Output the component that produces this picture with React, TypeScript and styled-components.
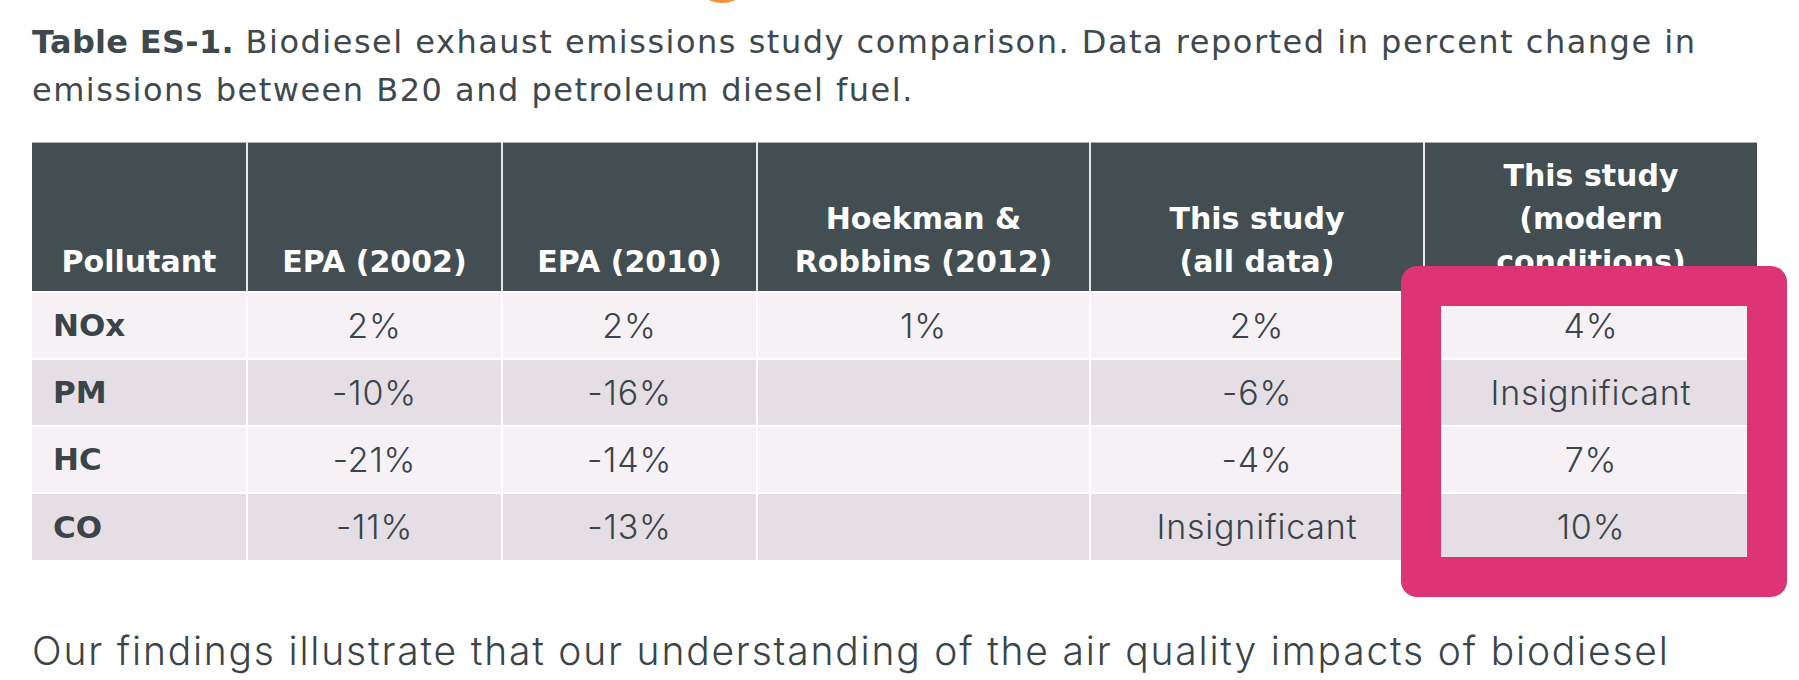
import styled, { createGlobalStyle } from 'styled-components';

const GlobalStyle = createGlobalStyle`
  html, body {
    margin: 0;
    padding: 0;
    background: #ffffff;
  }
  body {
    font-family: "DejaVu Sans", Inter, "Liberation Sans", sans-serif;
    color: #3e484d;
    overflow: hidden;
  }
`;

const lightFont = `Inter, "Open Sans", "Liberation Sans", sans-serif`;

const Page = styled.div`
  position: relative;
  width: 1799px;
  height: 680px;
  padding: 18px 0 0 32px;
  box-sizing: border-box;
  overflow: hidden;
`;

const OrangeDot = styled.div`
  position: absolute;
  top: -57px;
  left: 692px;
  width: 60px;
  height: 60px;
  border-radius: 50%;
  background: #f4903c;
`;

const Caption = styled.p`
  margin: 0;
  font-size: 32px;
  line-height: 48px;
  font-weight: 400;
  letter-spacing: 1.5px;
  color: #3e484d;

  strong {
    font-weight: 700;
    letter-spacing: 0.3px;
  }
`;

const TableWrap = styled.div`
  position: relative;
  width: 1725px;
  margin-top: 28px;
`;

const Table = styled.table`
  width: 1725px;
  table-layout: fixed;
  border-collapse: collapse;
`;

const Col = styled.col<{ $w: number }>`
  width: ${(p) => p.$w}px;
`;

const HeadCell = styled.th`
  height: 149px;
  padding: 0 6px 8px;
  box-sizing: border-box;
  vertical-align: bottom;
  text-align: center;
  background: #434e53;
  color: #ffffff;
  font-size: 30px;
  line-height: 43px;
  font-weight: 700;
  border-top: 1px solid #a9aeb0;
  border-left: 2px solid #e4e6e7;
  border-bottom: 2px solid #ffffff;

  &:first-child {
    border-left: none;
  }
`;

const Row = styled.tr<{ $shade: 'light' | 'dark' }>`
  background: ${(p) => (p.$shade === 'light' ? '#f5f1f5' : '#e5dfe5')};
`;

const Cell = styled.td`
  height: 67px;
  padding: 0 12px;
  box-sizing: border-box;
  text-align: center;
  vertical-align: middle;
  font-family: ${lightFont};
  font-size: 34px;
  font-weight: 300;
  letter-spacing: 0.8px;
  color: #3a4449;
  border-left: 2px solid #ffffff;
  border-top: 2px solid #ffffff;
`;

const NameCell = styled(Cell)`
  border-left: none;
  text-align: left;
  padding-left: 21px;
  font-family: "DejaVu Sans", Inter, sans-serif;
  font-size: 31px;
  font-weight: 700;
  letter-spacing: 0;
`;

const Highlight = styled.div`
  position: absolute;
  top: 124px;
  left: 1369px;
  width: 386px;
  height: 331px;
  box-sizing: border-box;
  border: 40px solid #dc3474;
  border-radius: 16px;
  pointer-events: none;
`;

const Body = styled.p`
  margin: 66px 0 0;
  font-family: ${lightFont};
  font-size: 39px;
  line-height: 50px;
  font-weight: 300;
  letter-spacing: 1.8px;
  color: #3a4449;
  white-space: nowrap;
`;

const columns = [215, 255, 255, 333, 334, 333];

const rows = [
  { name: 'NOx', values: ['2%', '2%', '1%', '2%', '4%'] },
  { name: 'PM', values: ['-10%', '-16%', '', '-6%', 'Insignificant'] },
  { name: 'HC', values: ['-21%', '-14%', '', '-4%', '7%'] },
  { name: 'CO', values: ['-11%', '-13%', '', 'Insignificant', '10%'] },
];

export default function App() {
  return (
    <>
      <GlobalStyle />
      <Page>
        <OrangeDot />
        <Caption>
          <strong>Table ES-1.</strong> Biodiesel exhaust emissions study comparison. Data reported in percent change in
          <br />
          emissions between B20 and petroleum diesel fuel.
        </Caption>

        <TableWrap>
          <Table>
            <colgroup>
              {columns.map((w, i) => (
                <Col key={i} $w={w} />
              ))}
            </colgroup>
            <thead>
              <tr>
                <HeadCell>Pollutant</HeadCell>
                <HeadCell>EPA (2002)</HeadCell>
                <HeadCell>EPA (2010)</HeadCell>
                <HeadCell>
                  Hoekman &amp;
                  <br />
                  Robbins (2012)
                </HeadCell>
                <HeadCell>
                  This study
                  <br />
                  (all data)
                </HeadCell>
                <HeadCell>
                  This study
                  <br />
                  (modern
                  <br />
                  conditions)
                </HeadCell>
              </tr>
            </thead>
            <tbody>
              {rows.map((r, i) => (
                <Row key={r.name} $shade={i % 2 === 0 ? 'light' : 'dark'}>
                  <NameCell>{r.name}</NameCell>
                  {r.values.map((v, j) => (
                    <Cell key={j}>{v}</Cell>
                  ))}
                </Row>
              ))}
            </tbody>
          </Table>
          <Highlight />
        </TableWrap>

        <Body>Our findings illustrate that our understanding of the air quality impacts of biodiesel</Body>
      </Page>
    </>
  );
}
